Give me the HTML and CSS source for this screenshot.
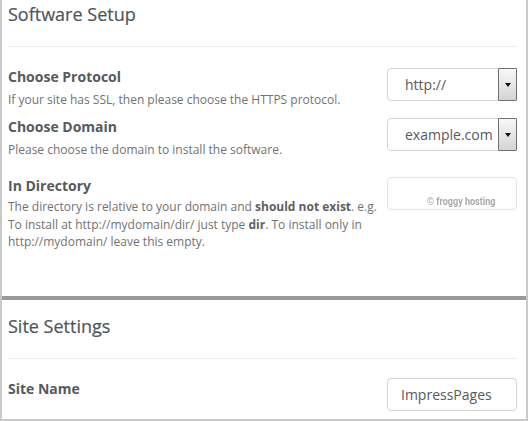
FILE: index.html
```html
<!DOCTYPE html>
<html>
<head>
<meta charset="utf-8">
<link rel="stylesheet" href="styles.css">
</head>
<body>
<div class="panel">
  <section class="section section-software">
    <h2 class="section-title">Software Setup</h2>
    <hr class="divider">
    <div class="field field-first">
      <div class="field-text">
        <div class="field-label">Choose Protocol</div>
        <div class="field-desc">If your site has SSL, then please choose the HTTPS protocol.</div>
      </div>
      <div class="control select">
        <span class="select-value">http://</span>
        <span class="select-button"><span class="select-arrow"></span></span>
      </div>
    </div>
    <div class="field field-domain">
      <div class="field-text">
        <div class="field-label">Choose Domain</div>
        <div class="field-desc">Please choose the domain to install the software.</div>
      </div>
      <div class="control select">
        <span class="select-value">example.com</span>
        <span class="select-button"><span class="select-arrow"></span></span>
      </div>
    </div>
    <div class="field field-directory">
      <div class="field-text">
        <div class="field-label">In Directory</div>
        <div class="field-desc field-desc-multi">The directory is relative to your domain and <b>should not exist</b>. e.g.<br>To install at http://mydomain/dir/ just type <b>dir</b>. To install only in<br>http://mydomain/ leave this empty.</div>
      </div>
      <div class="control input input-empty">
        <span class="watermark">© froggy hosting</span>
      </div>
    </div>
  </section>
  <div class="separator"></div>
  <section class="section section-site">
    <h2 class="section-title">Site Settings</h2>
    <hr class="divider">
    <div class="field field-site">
      <div class="field-text">
        <div class="field-label field-label-site">Site Name</div>
      </div>
      <div class="control input">
        <span class="input-value">ImpressPages</span>
      </div>
    </div>
  </section>
</div>
</body>
</html>
```
FILE: styles.css
```css
html, body {
  margin: 0;
  padding: 0;
  background: #ffffff;
}

body {
  font-family: "Open Sans", "DejaVu Sans", sans-serif;
  color: #555555;
}

.panel {
  width: 528px;
  height: 421px;
  box-sizing: border-box;
  border: 2px solid #c9c9c9;
  border-top: 0;
  background: #ffffff;
  overflow: hidden;
}

.section {
  padding: 2px 9px 0 6px;
}

.section-software {
  padding-bottom: 45px;
}

.section-site {
  padding-top: 14px;
}

.section-title {
  margin: 0;
  font-size: 18px;
  line-height: 24px;
  font-weight: normal;
  color: #50555b;
  -webkit-text-stroke: 0.2px #50555b;
}

.divider {
  margin: 20px 0 0;
  height: 1px;
  border: 0;
  background: #ececec;
}

.field {
  display: flex;
  align-items: flex-start;
}

.field-first {
  margin-top: 21px;
}

.field-domain {
  margin-top: 10px;
}

.field-directory {
  margin-top: 19px;
}

.field-site {
  margin-top: 19px;
}

.field-text {
  flex: 1;
  min-width: 0;
}

.field-label {
  font-size: 14px;
  line-height: 18px;
  font-weight: bold;
  color: #555a60;
}

.field-label-site {
  padding-top: 2px;
}

.field-desc {
  margin-top: 5px;
  font-size: 12px;
  line-height: 17px;
  color: #727272;
  white-space: nowrap;
}

.field-desc-multi {
  margin-top: 3px;
  line-height: 17.5px;
}

.field-desc b {
  color: #5f5f5f;
}

.control {
  position: relative;
  width: 130px;
  height: 33px;
  box-sizing: border-box;
  border: 1px solid #d4d4d4;
  border-radius: 4px;
  background: #ffffff;
  display: flex;
  font-size: 14px;
  line-height: 31px;
  color: #555a60;
}

.select-value {
  flex: 1;
  padding-left: 17px;
}

.select-button {
  width: 17px;
  margin: -1px -1px -1px 0;
  border: 1px solid #707070;
  border-radius: 1px;
  background: linear-gradient(#f8f8f8, #d4d4d4);
  display: flex;
  align-items: center;
  justify-content: center;
}

.select-arrow {
  width: 0;
  height: 0;
  border-left: 3px solid transparent;
  border-right: 3px solid transparent;
  border-top: 4px solid #111111;
}

.input-value {
  padding-left: 13px;
}

.input-empty {
  border-color: #e2e2e2;
}

.watermark {
  position: absolute;
  left: 39px;
  bottom: 2px;
  font-family: Roboto, "DejaVu Sans", sans-serif;
  font-weight: bold;
  font-size: 10.5px;
  line-height: 11px;
  color: #a9a9a9;
  transform: scaleX(0.86);
  transform-origin: left center;
  filter: blur(0.3px);
}

.separator {
  height: 4px;
  background: #9a9a9a;
}
```
